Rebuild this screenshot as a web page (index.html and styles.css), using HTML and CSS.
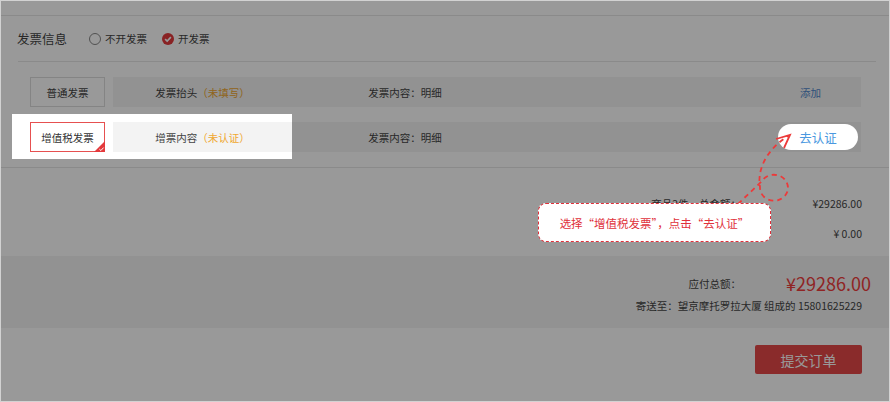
FILE: index.html
```html
<!DOCTYPE html>
<html lang="zh-CN">
<head>
  <meta charset="UTF-8" />
  <meta name="viewport" content="width=device-width, initial-scale=1.0"/>
  <title>确认订单 - 发票信息</title>
  <link rel="stylesheet" href="styles.css">
</head>
<body>

  <div class="frame">
    <div class="top-gap"></div>

    <section class="invoice">
      <div class="invoice-head">
        <span class="title">发票信息</span>
        <label class="radio"><span class="radio-off"></span>不开发票</label>
        <label class="radio">
          <svg class="radio-on" width="12" height="12" viewBox="0 0 12 12">
            <circle cx="6" cy="6" r="6" fill="#e4393c"/>
            <path d="M3.1 6.1 L5.2 8.1 L8.9 4.1" stroke="#fff" stroke-width="1.6" fill="none"/>
          </svg>开发票</label>
      </div>

      <div class="invoice-rows">
        <div class="inv-row">
          <div class="inv-type">普通发票</div>
          <div class="cell cell-head">发票抬头<span class="warn">（未填写）</span></div>
          <div class="cell cell-content">发票内容：明细</div>
          <div class="cell cell-action"><a class="add-link">添加</a></div>
        </div>

        <div class="inv-row">
          <div class="spot">
            <div class="inv-type selected">增值税发票
              <svg class="corner" width="11" height="11" viewBox="0 0 11 11">
                <path d="M11 0 V11 H0 Z" fill="#e4393c"/>
                <path d="M5.4 8.2 L6.9 9.5 L9.6 6.6" stroke="#fff" stroke-width="1" fill="none"/>
              </svg>
            </div>
            <div class="cell cell-head">增票内容<span class="warn">（未认证）</span></div>
          </div>
          <div class="cell cell-content">发票内容：明细</div>
          <div class="cell cell-action"><a class="verify">去认证</a></div>
        </div>
      </div>
    </section>

    <section class="summary">
      <div class="sum-row">
        <span class="sum-label">商品2件，总金额：</span>
        <span class="sum-val">¥29286.00</span>
      </div>
      <div class="sum-row">
        <span class="sum-label"></span>
        <span class="sum-val">¥ 0.00</span>
      </div>
    </section>

    <section class="total">
      <div class="total-line">
        <span class="total-label">应付总额：</span>
        <span class="total-amount">¥29286.00</span>
      </div>
      <div class="address">寄送至：望京摩托罗拉大厦 组成的 15801625229</div>
    </section>

    <div class="submit-bar">
      <button class="submit">提交订单</button>
    </div>

    <!-- guide overlay -->
    <div class="mask"></div>

    <svg class="guide-arrow" width="888" height="400" viewBox="1 1 888 400">
      <path d="M738 204 L762 181 A14 13 0 1 1 760 187 C757 170 766 150 788 136"
            stroke="#ec3a3a" stroke-width="1.8" stroke-dasharray="5 4" fill="none"/>
      <path d="M776 139 L790 135 L784 148" stroke="#ec3a3a" stroke-width="1.8" fill="none"/>
    </svg>

    <div class="tip">选择“增值税发票”，点击“去认证”</div>
  </div>

</body>
</html>
```

FILE: styles.css
```css
html, body {
  margin: 0;
  padding: 0;
  font-family: "Noto Sans CJK SC", "Noto Sans", sans-serif;
  font-size: 10.5px;
  color: #444;
  background: #fff;
}

.frame {
  position: relative;
  width: 890px;
  height: 402px;
  box-sizing: border-box;
  border: 1px solid #d2d2d2;
  overflow: hidden;
  background: #fff;
}

.top-gap {
  height: 14px;
  border-bottom: 1px solid #e6e6e6;
}

/* invoice section */
.invoice {
  border-bottom: 1px solid #e6e6e6;
}

.invoice-head {
  display: flex;
  align-items: center;
  height: 45px;
  padding-left: 16px;
}

.invoice-head .title {
  font-size: 12.5px;
  color: #444;
  margin-right: 22px;
}

.radio {
  display: flex;
  align-items: center;
  gap: 4px;
  margin-right: 15px;
  color: #444;
}

.radio-off {
  width: 10px;
  height: 10px;
  border: 1px solid #888;
  border-radius: 50%;
}

.invoice-rows {
  border-top: 1px solid #e6e6e6;
  margin: 0 13px 0 17px;
  padding: 15px 15px 15px 12px;
  display: flex;
  flex-direction: column;
  gap: 15px;
}

.inv-row {
  display: flex;
  height: 30px;
}

.inv-type {
  position: relative;
  width: 75px;
  height: 30px;
  box-sizing: border-box;
  border: 1px solid #ddd;
  margin-right: 8px;
  display: flex;
  align-items: center;
  justify-content: center;
  color: #444;
  background: #fff;
}

.inv-type.selected {
  border-color: #e65050;
  color: #333;
}

.corner {
  position: absolute;
  right: -1px;
  bottom: -1px;
}

.cell {
  height: 30px;
  background: #f3f3f3;
  display: flex;
  align-items: center;
}

.cell-head {
  width: 179px;
  justify-content: center;
}

.cell-content {
  width: 226px;
  justify-content: center;
}

.cell-action {
  flex: 1;
  justify-content: flex-end;
}

.warn {
  color: #f0a830;
}

.add-link {
  color: #5188cc;
  margin-right: 40px;
}

/* highlighted parts sit above the mask */
.spot {
  position: relative;
  z-index: 11;
  display: flex;
  background: #fff;
  padding: 8px 0 7px 18px;
  margin: -8px 0 -7px -18px;
}

.verify {
  position: relative;
  z-index: 11;
  width: 80px;
  height: 26px;
  margin-right: 3px;
  border-radius: 13px;
  background: #fff;
  color: #4a98e0;
  font-size: 12.5px;
  display: flex;
  align-items: center;
  justify-content: center;
}

/* summary */
.summary {
  padding: 20px 27px 8px 0;
}

.sum-row {
  display: flex;
  justify-content: flex-end;
  align-items: center;
  height: 30px;
}

.sum-val {
  width: 121px;
  text-align: right;
  color: #444;
}

.total {
  background: #f3f3f3;
  padding: 14px 0 12px;
}

.total-line {
  display: flex;
  justify-content: flex-end;
  align-items: center;
  height: 26px;
  padding-right: 18px;
}

.total-amount {
  width: 130px;
  text-align: right;
  font-size: 18px;
  color: #f03c3c;
}

.address {
  height: 20px;
  line-height: 20px;
  text-align: right;
  padding-right: 27px;
}

.submit-bar {
  display: flex;
  justify-content: flex-end;
  padding-right: 27px;
  margin-top: 17px;
}

.submit {
  width: 107px;
  height: 29px;
  border: none;
  border-radius: 2px;
  background: #e64848;
  color: #fff;
  font-family: inherit;
  font-size: 14px;
  cursor: pointer;
}

/* guide overlay */
.mask {
  position: absolute;
  inset: 0;
  background: rgba(0, 0, 0, 0.4);
  z-index: 10;
}

.guide-arrow {
  position: absolute;
  left: 0;
  top: 0;
  z-index: 12;
  pointer-events: none;
}

.tip {
  position: absolute;
  left: 537px;
  top: 202px;
  width: 233px;
  height: 39px;
  box-sizing: border-box;
  z-index: 13;
  background: #fff;
  border: 1px dashed #e0313b;
  border-radius: 8px;
  color: #e0313b;
  font-size: 11.5px;
  font-feature-settings: "fwid";
  display: flex;
  align-items: center;
  justify-content: center;
}
```
